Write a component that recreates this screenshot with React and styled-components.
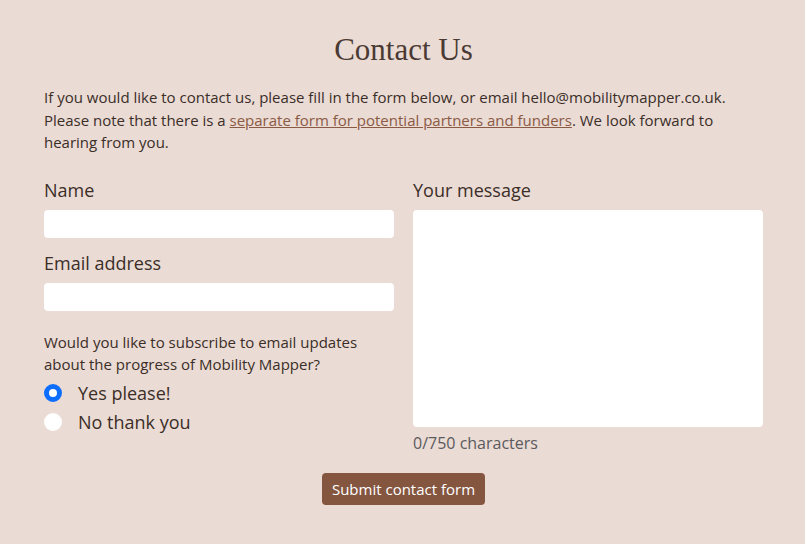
import React, { useState } from 'react';
import styled, { createGlobalStyle } from 'styled-components';

const GlobalStyle = createGlobalStyle`
  body {
    margin: 0;
    background: #eadbd4;
    font-family: "Open Sans", "Noto Sans", sans-serif;
    color: #3b2e28;
  }
`

function App() {
  const [subscribe, setSubscribe] = useState('yes');
  const [message, setMessage] = useState('');
  return (
    <>
      <GlobalStyle />
      <Page>
        <Title>Contact Us</Title>
        <Intro>
          If you would like to contact us, please fill in the form below, or email hello@mobilitymapper.co.uk.
          Please note that there is a <Link href="#">separate form for potential partners and funders</Link>. We look forward to
          hearing from you.
        </Intro>
        <Form onSubmit={e => e.preventDefault()}>
          <Columns>
            <Column>
              <Label htmlFor="name">Name</Label>
              <Input id="name" type="text" />
              <Label htmlFor="email" $spaced>Email address</Label>
              <Input id="email" type="email" />
              <Question>
                Would you like to subscribe to email updates about the progress of Mobility Mapper?
              </Question>
              <RadioRow>
                <Radio type="radio" name="sub" checked={subscribe === 'yes'} onChange={() => setSubscribe('yes')} />
                Yes please!
              </RadioRow>
              <RadioRow>
                <Radio type="radio" name="sub" checked={subscribe === 'no'} onChange={() => setSubscribe('no')} />
                No thank you
              </RadioRow>
            </Column>
            <Column>
              <Label htmlFor="msg">Your message</Label>
              <TextArea id="msg" value={message} maxLength={750} onChange={e => setMessage(e.target.value)} />
              <Counter>{message.length}/750 characters</Counter>
            </Column>
          </Columns>
          <Submit type="submit">Submit contact form</Submit>
        </Form>
      </Page>
    </>
  )
}

const Page = styled.div`
  width: 719px;
  margin: 0 auto;
  padding-top: 32px;
  padding-left: 2px;
`
const Title = styled.h1`
  font-family: "Liberation Serif", "DejaVu Serif", serif;
  font-weight: 400;
  font-size: 31px;
  line-height: 36px;
  margin: 0 0 18px;
  text-align: center;
  color: #4a3a33;
`
const Intro = styled.p`
  font-size: 15px;
  line-height: 22.5px;
  margin: 0 0 23px;
`
const Link = styled.a`
  color: #8b5a44;
  text-decoration: underline;
`
const Form = styled.form`
  display: flex;
  flex-direction: column;
  align-items: center;
`
const Columns = styled.div`
  display: grid;
  grid-template-columns: 350px 350px;
  column-gap: 19px;
  width: 100%;
`
const Column = styled.div`
  display: flex;
  flex-direction: column;
`
const Label = styled.label`
  font-size: 18px;
  line-height: 27px;
  margin-top: ${p => (p.$spaced ? '12px' : '0')};
  margin-bottom: 6px;
`
const Input = styled.input`
  box-sizing: border-box;
  height: 28px;
  width: 100%;
  border: none;
  border-radius: 4px;
  background: #fff;
  padding: 0 8px;
  font-family: inherit;
  font-size: 15px;
  outline: none;
`
const Question = styled.p`
  font-size: 15px;
  line-height: 22px;
  margin: 20px 0 4px;
`
const RadioRow = styled.label`
  display: flex;
  align-items: center;
  gap: 16px;
  font-size: 18px;
  line-height: 29px;
`
const Radio = styled.input`
  appearance: none;
  width: 18px;
  height: 18px;
  margin: 0;
  border-radius: 50%;
  background: #fff;
  box-sizing: border-box;
  &:checked {
    background: #fff;
    border: 5px solid #0d6efd;
  }
`
const TextArea = styled.textarea`
  box-sizing: border-box;
  height: 217px;
  width: 100%;
  border: none;
  border-radius: 4px;
  background: #fff;
  resize: none;
  padding: 8px;
  font-family: inherit;
  font-size: 15px;
  outline: none;
`
const Counter = styled.div`
  font-size: 16px;
  line-height: 24px;
  margin-top: 4px;
  color: #5a5a5e;
`
const Submit = styled.button`
  margin-top: 18px;
  height: 32px;
  padding: 0 10px;
  border: none;
  border-radius: 4px;
  background: #85563f;
  color: #fff;
  font-family: "Open Sans", sans-serif;
  font-size: 15px;
  cursor: pointer;
`

export default App;
